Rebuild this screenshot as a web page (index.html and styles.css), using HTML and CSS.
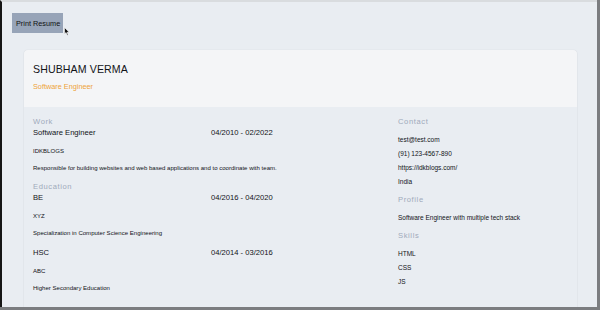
FILE: index.html
```html
<!DOCTYPE html>
<html>
<head>
<meta charset="utf-8">
<link rel="stylesheet" href="styles.css">
</head>
<body>
<div class="frame">
  <div class="toolbar">
    <button class="print-btn">Print Resume</button>
    <svg class="cursor" width="6" height="9" viewBox="0 0 6 9"><path d="M0.5 0.5 L0.5 7 L2 5.6 L3.2 8.3 L4.2 7.9 L3.1 5.3 L5.2 5.3 Z" fill="#111" stroke="#fff" stroke-width="0.6"/></svg>
  </div>
  <div class="card">
    <header class="card-head">
      <h1 class="name">SHUBHAM VERMA</h1>
      <p class="role">Software Engineer</p>
    </header>
    <div class="card-body">
      <div class="main-col">
        <section class="section">
          <h2 class="label">Work</h2>
          <div class="item">
            <div class="row"><span class="title">Software Engineer</span><span class="title">04/2010 - 02/2022</span></div>
            <p class="org">IDKBLOGS</p>
            <p class="desc">Responsible for building websites and web based applications and to coordinate with team.</p>
          </div>
        </section>
        <section class="section">
          <h2 class="label">Education</h2>
          <div class="item">
            <div class="row"><span class="title">BE</span><span class="title">04/2016 - 04/2020</span></div>
            <p class="org">XYZ</p>
            <p class="desc">Specialization in Computer Science Engineering</p>
          </div>
          <div class="item">
            <div class="row"><span class="title">HSC</span><span class="title">04/2014 - 03/2016</span></div>
            <p class="org">ABC</p>
            <p class="desc">Higher Secondary Education</p>
          </div>
        </section>
      </div>
      <div class="side-col">
        <section class="section">
          <h2 class="label">Contact</h2>
          <ul class="list">
            <li>test@test.com</li>
            <li>(91) 123-4567-890</li>
            <li>https://idkblogs.com/</li>
            <li>India</li>
          </ul>
        </section>
        <section class="section">
          <h2 class="label">Profile</h2>
          <ul class="list"><li>Software Engineer with multiple tech stack</li></ul>
        </section>
        <section class="section">
          <h2 class="label">Skills</h2>
          <ul class="list">
            <li>HTML</li>
            <li>CSS</li>
            <li>JS</li>
          </ul>
        </section>
      </div>
    </div>
  </div>
</div>
</body>
</html>
```
FILE: styles.css
```css
* { box-sizing: border-box; }
html, body { margin: 0; padding: 0; height: 100%; }
body {
  font-family: "Liberation Sans", Arial, sans-serif;
  color: #111318;
  background: #7b7d80;
  overflow: hidden;
}
.frame {
  height: 307px;
  margin-right: 3px;
  border-left: 2px solid #161616;
  border-top: 2px solid #d9dcdf;
  background: #e9edf2;
  padding: 11px 20px 0 10px;
  overflow: hidden;
  position: relative;
}
.frame::after {
  content: "";
  position: absolute;
  right: -3px;
  top: -2px;
  width: 3px;
  height: 30px;
  background: #111;
}
.toolbar {
  display: flex;
  align-items: flex-start;
  height: 37px;
}
.print-btn {
  font-family: inherit;
  font-size: 7.3px;
  color: #111;
  background: #97a4b8;
  border: none;
  padding: 0 3px 0 4px;
  height: 20px;
  white-space: nowrap;
  margin: 0;
}
.cursor { margin: 14px 0 0 1px; }
.card {
  margin-left: 12px;
  background: #e9edf2;
  border-radius: 4px 4px 0 0;
  box-shadow: 0 0 1px rgba(0,0,0,0.18), 0 1px 2px rgba(0,0,0,0.05);
  height: 300px;
}
.card-head {
  background: #f4f5f7;
  border-radius: 4px 4px 0 0;
  padding: 12px 9px 14px;
  height: 57px;
}
.name {
  margin: 0;
  font-size: 10.6px;
  font-weight: 400;
  line-height: 14px;
  letter-spacing: 0.1px;
}
.role {
  margin: 5px 0 0;
  font-size: 7.3px;
  line-height: 11px;
  color: #eea33a;
}
.card-body {
  display: flex;
  gap: 9px;
  padding: 9px 9px 0;
}
.main-col { width: 356px; }
.side-col { flex: 1; }
.section { margin-top: 7px; }
.section:first-child { margin-top: 0; }
.label {
  margin: 0;
  font-size: 7.6px;
  font-weight: 400;
  line-height: 11px;
  letter-spacing: 0.6px;
  color: #9faabb;
}
.item + .item { margin-top: 8px; }
.row {
  display: grid;
  grid-template-columns: 1fr 1fr;
  line-height: 11px;
  font-size: 7.6px;
}
.org, .desc {
  margin: 0;
  font-size: 6.05px;
  line-height: 11px;
}
.org { margin-top: 8px; }
.desc { margin-top: 6px; }
.list {
  list-style: none;
  margin: 7px 0 0;
  padding: 0;
  font-size: 6.5px;
}
.list li { line-height: 11px; }
.list li + li { margin-top: 3px; }
```
